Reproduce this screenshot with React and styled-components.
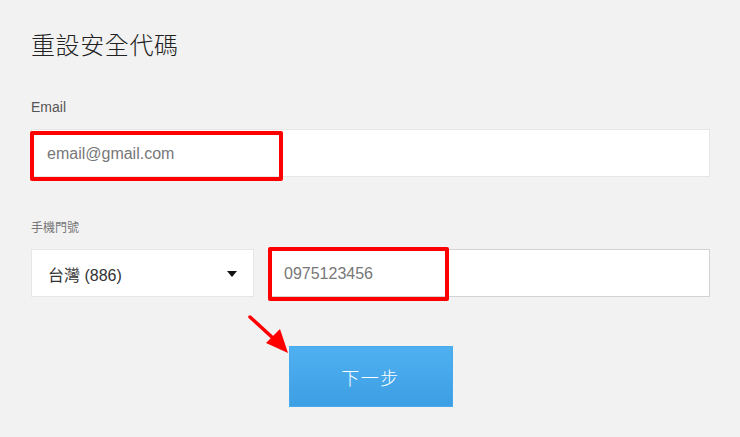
import React from "react";
import styled, { createGlobalStyle } from "styled-components";

const GlobalStyle = createGlobalStyle`
	html, body {
		margin: 0;
		padding: 0;
		background: #f2f2f2;
	}
	body {
		font-family: "Liberation Sans", Arial, "Noto Sans CJK TC", sans-serif;
	}
`;

const Page = styled.div`
	box-sizing: border-box;
	width: 740px;
	height: 437px;
	padding: 28px 30px 0 31px;
	background: #f2f2f2;
`;

const Title = styled.h1`
	margin: 0;
	font-family: "Noto Sans CJK TC", sans-serif;
	font-weight: 300;
	font-size: 24px;
	line-height: 32px;
	color: #222;
	letter-spacing: 0.6px;
`;

const Label = styled.div`
	margin-top: ${(p) => p.top}px;
	font-family: "Liberation Sans", "Noto Sans CJK TC", sans-serif;
	font-size: ${(p) => p.size}px;
	line-height: 16px;
	color: ${(p) => p.color};
`;

const Field = styled.div`
	position: relative;
	box-sizing: border-box;
	height: 48px;
	margin-top: ${(p) => p.top || 0}px;
	background: #fff;
	border: 1px solid ${(p) => p.border || "#e6e6e6"};
	display: flex;
	align-items: center;
	padding-left: ${(p) => p.pad || 15}px;
	padding-top: 1px;
	font-size: 16px;
	color: ${(p) => p.color || "#777"};
	flex: ${(p) => p.flex || "none"};
	width: ${(p) => (p.width ? `${p.width}px` : "auto")};
`;

const Row = styled.div`
	display: flex;
	gap: 14px;
	margin-top: 13px;
`;

const SelectText = styled.span`
	flex: 1;
	font-family: "Liberation Sans", "Noto Sans CJK TC", sans-serif;
	color: #333;
`;

const Caret = styled.span`
	width: 0;
	height: 0;
	margin-right: 16px;
	border-left: 5px solid transparent;
	border-right: 5px solid transparent;
	border-top: 6px solid #111;
`;

const Highlight = styled.div`
	position: absolute;
	left: ${(p) => p.x}px;
	top: ${(p) => p.y}px;
	width: ${(p) => p.w}px;
	height: ${(p) => p.h}px;
	box-sizing: border-box;
	border: 4px solid #ff0000;
	border-radius: 2px;
	pointer-events: none;
`;

const ButtonWrap = styled.div`
	display: flex;
	justify-content: center;
	margin-top: 49px;
`;

const Button = styled.button`
	position: relative;
	width: 164px;
	height: 61px;
	border: 1px solid #48a9ec;
	background: linear-gradient(#4fb0f1, #3d9fe3);
	color: #fff;
	font-family: "Noto Sans CJK TC", sans-serif;
	font-weight: 300;
	font-size: 18px;
	letter-spacing: 1.5px;
	cursor: pointer;
	padding: 0;
`;

const Pointer = styled.svg`
	position: absolute;
	left: -44px;
	top: -34px;
`;

const App = () => (
	<Page>
		<GlobalStyle />
		<Title>重設安全代碼</Title>
		<Label top={39} size={14} color="#555">
			Email
		</Label>
		<Field top={14}>
			email@gmail.com
			<Highlight x={-2} y={1} w={253} h={50} />
		</Field>
		<Label top={43} size={12} color="#777">
			手機門號
		</Label>
		<Row>
			<Field width={223} pad={16}>
				<SelectText>台灣 (886)</SelectText>
				<Caret />
			</Field>
			<Field flex="1" border="#d3d3d3">
				0975123456
				<Highlight x={-1} y={-3} w={181} h={54} />
			</Field>
		</Row>
		<ButtonWrap>
			<Button>
				下一步
				<Pointer width="44" height="42" viewBox="0 0 44 42">
					<line x1="4" y1="4" x2="28" y2="26" stroke="#ff0000" strokeWidth="3.5" strokeLinecap="round" />
					<polygon points="20,30 34,16 42,40" fill="#ff0000" />
				</Pointer>
			</Button>
		</ButtonWrap>
	</Page>
);

export default App;
